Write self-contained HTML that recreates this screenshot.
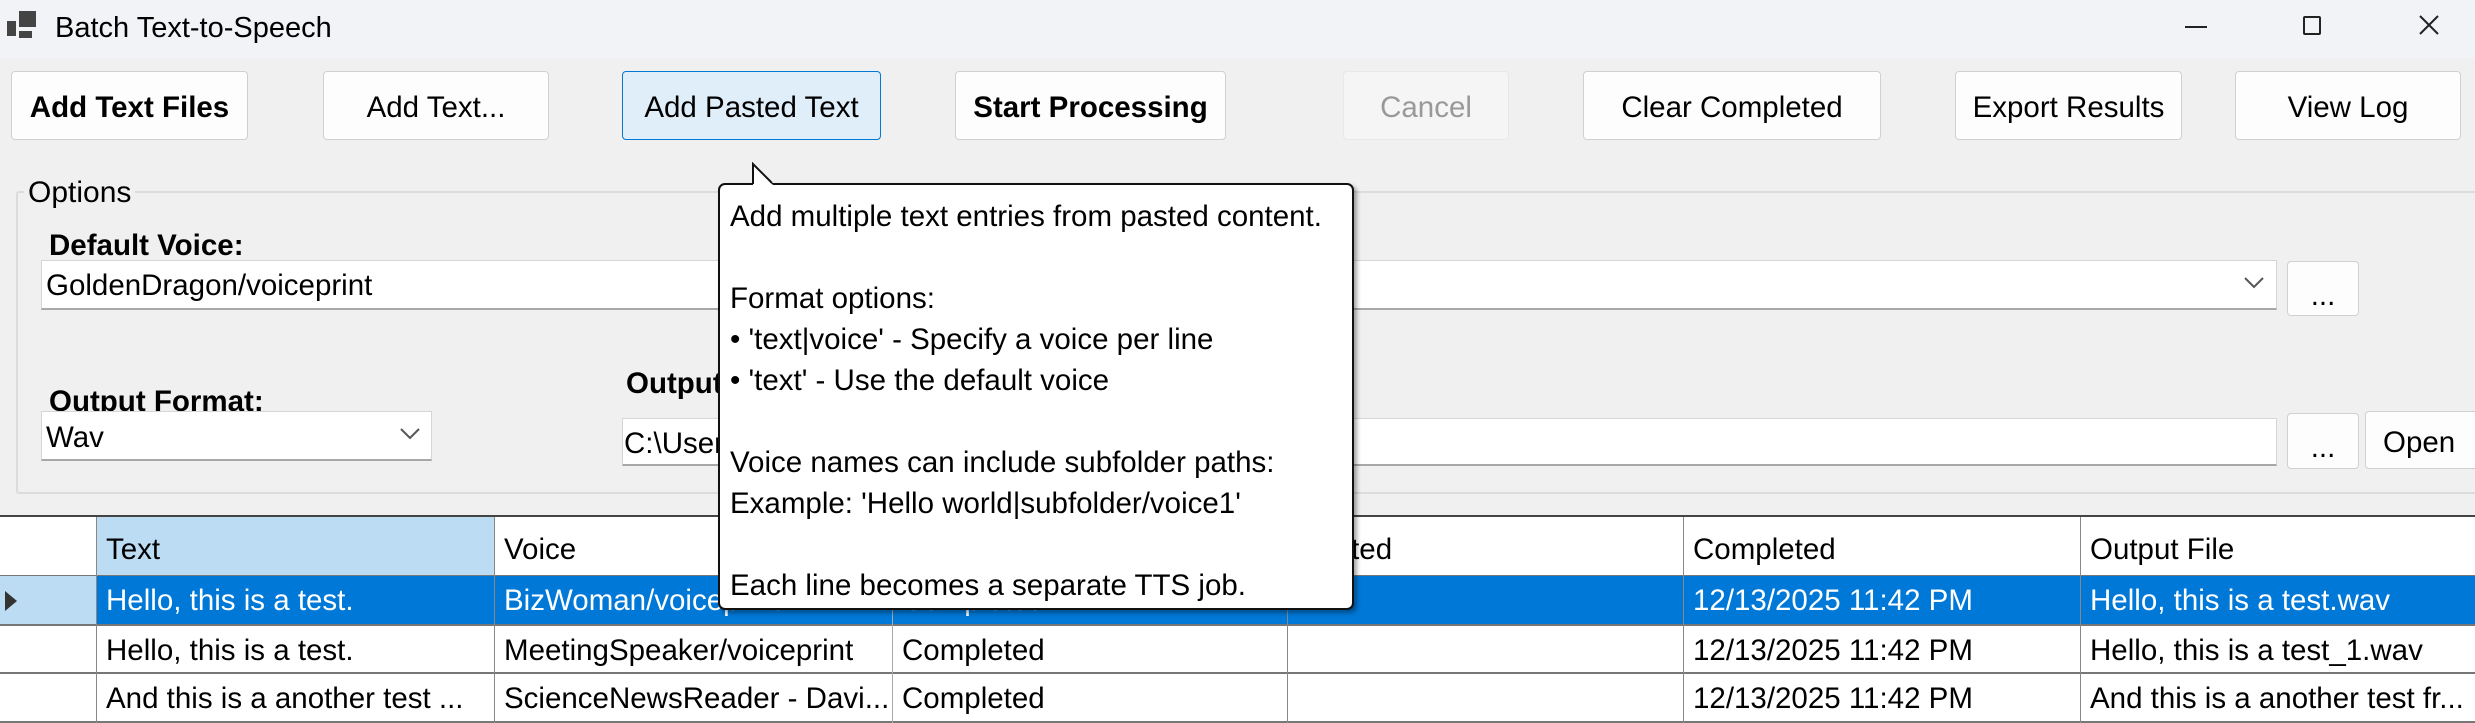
<!DOCTYPE html>
<html><head><meta charset="utf-8"><style>
*{box-sizing:border-box;margin:0;padding:0}
body{width:2475px;height:723px;background:#f0f0f0;font-family:"Liberation Sans",sans-serif;font-size:29px;color:#000;position:relative;overflow:hidden}
.a{position:absolute}
.title{left:0;top:0;width:2475px;height:58px;background:#f2f3f7}
.btn{position:absolute;background:#fdfdfd;border:1px solid #d0d0d0;border-radius:4px;display:flex;align-items:center;justify-content:center;font-size:29.5px;padding-top:5px}
.box{position:absolute;background:#fff;border:1px solid #d6d6d6;border-bottom:2px solid #a8a8a8}
.cell{position:absolute;height:48px;line-height:48px;padding-left:10px;white-space:nowrap;overflow:hidden;font-size:29.5px}
</style></head><body>
<div class="a title"></div>
<div class="a" style="left:7px;top:21px;width:9px;height:15px;background:#444"></div>
<div class="a" style="left:19px;top:11px;width:17px;height:16px;background:#444"></div>
<div class="a" style="left:19px;top:31px;width:13px;height:7px;background:#444"></div>
<div class="a" style="left:55px;top:12px;font-size:29px">Batch Text-to-Speech</div>
<div class="a" style="left:2185px;top:26px;width:22px;height:2px;background:#222"></div>
<div class="a" style="left:2303px;top:16px;width:18px;height:19px;border:2px solid #222;border-radius:2px"></div>
<svg class="a" style="left:2418px;top:14px" width="22" height="22"><path d="M2 2L20 20M20 2L2 20" stroke="#222" stroke-width="2"/></svg>

<div class="btn" style="left:11px;top:71px;width:237px;height:69px;font-weight:bold">Add Text Files</div>
<div class="btn" style="left:323px;top:71px;width:226px;height:69px">Add Text...</div>
<div class="btn" style="left:622px;top:71px;width:259px;height:69px;background:#e0eef9;border-color:#0078d4">Add Pasted Text</div>
<div class="btn" style="left:955px;top:71px;width:271px;height:69px;font-weight:bold">Start Processing</div>
<div class="btn" style="left:1343px;top:71px;width:166px;height:69px;background:#f5f5f5;border-color:#e8e8e8;color:#999">Cancel</div>
<div class="btn" style="left:1583px;top:71px;width:298px;height:69px">Clear Completed</div>
<div class="btn" style="left:1955px;top:71px;width:227px;height:69px">Export Results</div>
<div class="btn" style="left:2235px;top:71px;width:226px;height:69px">View Log</div>

<div class="a" style="left:16px;top:191px;width:2470px;height:303px;border:2px solid #dcdcdc;border-radius:3px"></div>
<div class="a" style="left:24px;top:176px;background:#f0f0f0;padding:0 4px;font-size:30px">Options</div>
<div class="a" style="left:49px;top:229px;font-weight:bold;font-size:29.5px">Default Voice:</div>
<div class="box" style="left:41px;top:260px;width:2236px;height:50px"></div>
<div class="a" style="left:46px;top:269px;font-size:29.5px">GoldenDragon/voiceprint</div>
<svg class="a" style="left:2244px;top:277px" width="20" height="12"><path d="M1 1L10 10L19 1" stroke="#555" stroke-width="2" fill="none"/></svg>
<div class="btn" style="left:2287px;top:261px;width:72px;height:55px;padding-top:14px">...</div>
<div class="a" style="left:49px;top:385px;font-weight:bold;font-size:29.5px">Output Format:</div>
<div class="box" style="left:41px;top:411px;width:391px;height:50px"></div>
<div class="a" style="left:46px;top:421px;font-size:29.5px">Wav</div>
<svg class="a" style="left:400px;top:428px" width="20" height="12"><path d="M1 1L10 10L19 1" stroke="#555" stroke-width="2" fill="none"/></svg>
<div class="a" style="left:626px;top:367px;font-weight:bold;font-size:29.5px">Output Folder:</div>
<div class="box" style="left:622px;top:418px;width:1655px;height:48px"></div>
<div class="a" style="left:624px;top:427px;font-size:29.5px">C:\Users</div>
<div class="btn" style="left:2287px;top:413px;width:72px;height:56px;padding-top:14px">...</div>
<div class="btn" style="left:2365px;top:411px;width:120px;height:58px;justify-content:flex-start;padding-left:17px">Open</div>

<div class="a" style="left:0;top:515px;width:2475px;height:208px;background:#fff;border-top:2px solid #444"></div>
<div class="a" style="left:96px;top:517px;width:398px;height:58px;background:#bcdcf4"></div>
<div class="a" style="left:0;top:576px;width:96px;height:48px;background:#bcdcf4"></div>
<div class="a" style="left:96px;top:576px;width:2379px;height:48px;background:#0078d7"></div>
<svg class="a" style="left:3px;top:590px" width="16" height="22"><path d="M2 1L14 11L2 21Z" fill="#333"/></svg>
<div class="a" style="left:0;top:575px;width:2475px;height:1px;background:#777"></div>
<div class="a" style="left:0;top:624px;width:2475px;height:2px;background:#777"></div>
<div class="a" style="left:0;top:672px;width:2475px;height:2px;background:#777"></div>
<div class="a" style="left:0;top:721px;width:2475px;height:2px;background:#777"></div>
<div class="a" style="left:96px;top:517px;width:1px;height:206px;background:#888"></div>
<div class="a" style="left:494px;top:517px;width:1px;height:206px;background:#888"></div>
<div class="a" style="left:892px;top:517px;width:1px;height:206px;background:#aaa"></div>
<div class="a" style="left:1287px;top:517px;width:1px;height:206px;background:#888"></div>
<div class="a" style="left:1683px;top:517px;width:1px;height:206px;background:#888"></div>
<div class="a" style="left:2080px;top:517px;width:1px;height:206px;background:#888"></div>

<div class="cell" style="left:96px;top:526px">Text</div>
<div class="cell" style="left:494px;top:526px">Voice</div>
<div class="cell" style="left:892px;top:526px">Status</div>
<div class="cell" style="left:1287px;top:526px">Started</div>
<div class="cell" style="left:1683px;top:526px">Completed</div>
<div class="cell" style="left:2080px;top:526px">Output File</div>

<div class="cell" style="left:96px;top:577px;color:#fff">Hello, this is a test.</div>
<div class="cell" style="left:494px;top:577px;color:#fff">BizWoman/voiceprint</div>
<div class="cell" style="left:892px;top:577px;color:#fff">Completed</div>
<div class="cell" style="left:1683px;top:577px;color:#fff">12/13/2025 11:42 PM</div>
<div class="cell" style="left:2080px;top:577px;color:#fff">Hello, this is a test.wav</div>

<div class="cell" style="left:96px;top:627px">Hello, this is a test.</div>
<div class="cell" style="left:494px;top:627px">MeetingSpeaker/voiceprint</div>
<div class="cell" style="left:892px;top:627px">Completed</div>
<div class="cell" style="left:1683px;top:627px">12/13/2025 11:42 PM</div>
<div class="cell" style="left:2080px;top:627px">Hello, this is a test_1.wav</div>

<div class="cell" style="left:96px;top:675px;width:398px">And this is a another test ...</div>
<div class="cell" style="left:494px;top:675px;width:398px">ScienceNewsReader - Davi...</div>
<div class="cell" style="left:892px;top:675px">Completed</div>
<div class="cell" style="left:1683px;top:675px">12/13/2025 11:42 PM</div>
<div class="cell" style="left:2080px;top:675px;width:395px">And this is a another test fr...</div>

<div class="a" style="left:718px;top:183px;width:636px;height:427px;background:#fff;border:2px solid #111;border-radius:7px;box-shadow:3px 3px 4px rgba(0,0,0,.35)"></div>
<svg class="a" style="left:750px;top:162px" width="30" height="24"><path d="M3 24L3 2L22 22L24 24Z" fill="#fff"/><path d="M3 22L3 2L22 21" stroke="#111" stroke-width="2" fill="none"/></svg>
<div class="a" style="left:730px;top:196px;font-size:29.5px;line-height:41px;white-space:pre">Add multiple text entries from pasted content.

Format options:
• 'text|voice' - Specify a voice per line
• 'text' - Use the default voice

Voice names can include subfolder paths:
Example: 'Hello world|subfolder/voice1'

Each line becomes a separate TTS job.</div>
</body></html>
